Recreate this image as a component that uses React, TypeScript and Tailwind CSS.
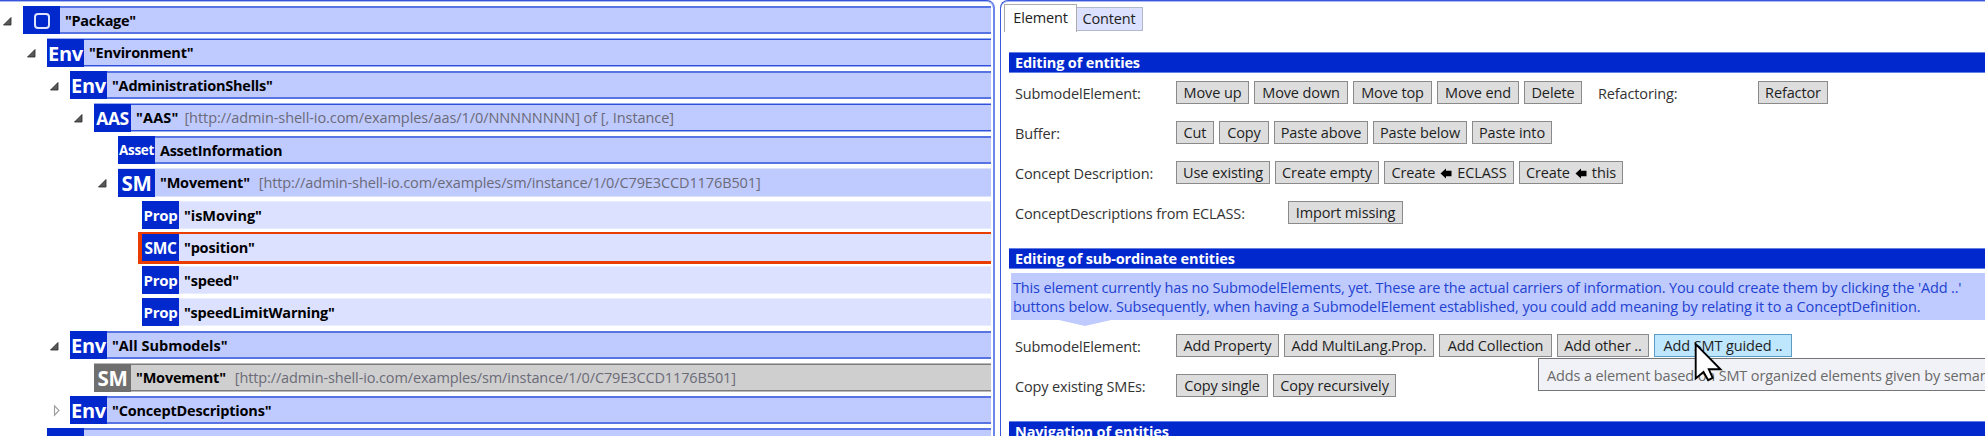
import React from "react";

type Kind = "blue" | "fine" | "plain" | "light" | "selected" | "grey";

interface NodeRow {
  indent: string;
  slot: string;
  kind: Kind;
  tag: string;
  tagSize: string;
  arrow?: "open" | "closed";
  name: string;
  nameTrack: string;
  info?: string;
  infoGap?: string;
  infoTrack?: string;
}

const SM_URL = "[http://admin-shell-io.com/examples/sm/instance/1/0/C79E3CCD1176B501]";
const ENV = "pt-[2px] text-[20px] tracking-[-0.3px]";
const SM = "pt-[2px] text-[20.5px] tracking-[-0.3px]";
const PROP = "text-[15px] tracking-[-0.3px]";

const nodes: NodeRow[] = [
  { indent: "pl-0", slot: "h-[32px]", kind: "blue", tag: "", tagSize: "pt-px", arrow: "open", name: '"Package"', nameTrack: "tracking-[-0.3px]" },
  { indent: "pl-[24px]", slot: "h-[33px]", kind: "fine", tag: "Env", tagSize: ENV, arrow: "open", name: '"Environment"', nameTrack: "tracking-[-0.27px]" },
  { indent: "pl-[47px]", slot: "h-[32px]", kind: "blue", tag: "Env", tagSize: ENV, arrow: "open", name: '"AdministrationShells"', nameTrack: "tracking-[-0.23px]" },
  { indent: "pl-[71px]", slot: "h-[33px]", kind: "fine", tag: "AAS", tagSize: "pt-[2px] text-[17.5px] tracking-[-0.4px]", arrow: "open", name: '"AAS"', nameTrack: "tracking-[0.15px]", info: "[http://admin-shell-io.com/examples/aas/1/0/NNNNNNNN] of [, Instance]", infoGap: "ml-[6px]", infoTrack: "tracking-[-0.07px]" },
  { indent: "pl-[95px]", slot: "h-[32px]", kind: "blue", tag: "Asset", tagSize: "pt-px text-[13.5px] tracking-[-0.3px]", name: "AssetInformation", nameTrack: "tracking-[-0.3px]" },
  { indent: "pl-[95px]", slot: "h-[33px]", kind: "plain", tag: "SM", tagSize: SM, arrow: "open", name: '"Movement"', nameTrack: "tracking-[-0.2px]", info: SM_URL, infoGap: "ml-[9px]", infoTrack: "tracking-[-0.11px]" },
  { indent: "pl-[119px]", slot: "h-[32px]", kind: "light", tag: "Prop", tagSize: PROP, name: '"isMoving"', nameTrack: "tracking-[-0.05px]" },
  { indent: "pl-[115px]", slot: "h-[33px]", kind: "selected", tag: "SMC", tagSize: "pt-[2px] text-[15.5px] tracking-[-0.3px]", name: '"position"', nameTrack: "tracking-[-0.2px]" },
  { indent: "pl-[119px]", slot: "h-[32px]", kind: "light", tag: "Prop", tagSize: PROP, name: '"speed"', nameTrack: "tracking-[-0.2px]" },
  { indent: "pl-[119px]", slot: "h-[33px]", kind: "light", tag: "Prop", tagSize: PROP, name: '"speedLimitWarning"', nameTrack: "tracking-[-0.23px]" },
  { indent: "pl-[47px]", slot: "h-[32px]", kind: "blue", tag: "Env", tagSize: ENV, arrow: "open", name: '"All Submodels"', nameTrack: "tracking-[0px]" },
  { indent: "pl-[71px]", slot: "h-[33px]", kind: "grey", tag: "SM", tagSize: SM, name: '"Movement"', nameTrack: "tracking-[-0.2px]", info: SM_URL, infoGap: "ml-[9px]", infoTrack: "tracking-[-0.12px]" },
  { indent: "pl-[47px]", slot: "h-[32px]", kind: "blue", tag: "Env", tagSize: ENV, arrow: "closed", name: '"ConceptDescriptions"', nameTrack: "tracking-[-0.2px]" },
  { indent: "pl-[24px]", slot: "h-[33px]", kind: "blue", tag: "Env", tagSize: ENV, name: "", nameTrack: "" },
];

const rowStyle: Record<Kind, string> = {
  blue: "h-[28px] bg-[#bfcaff] border-y-2 border-[#5873e2]",
  fine: "h-[29px] bg-[#bfcaff] border-y border-[#9aacf3] shadow-[inset_0_1px_0_#2f50d8,inset_0_-1px_0_#2f50d8]",
  plain: "h-[29px] bg-[#bfcaff] border-y border-[#dde3ff]",
  light: "h-[28px] bg-[#dbe1ff] border-y border-[#e8ecff]",
  selected: "-mt-px h-[32px] bg-[#dbe1ff] border-t-2 border-b-3 border-l-4 border-[#eb3c00]",
  grey: "h-[29px] bg-[#cfcfcf] border-y border-[#b9b9b9] shadow-[inset_0_1px_0_#7c7c7c,inset_0_-1px_0_#7c7c7c]",
};

function Arrow({ state }: { state?: "open" | "closed" }) {
  return (
    <svg className="mt-[9px] h-[12px] w-[23px] shrink-0" viewBox="0 0 23 12">
      {state === "open" && <path d="M11 2.5V10H3.5Z" fill="#595959" stroke="#262626" strokeWidth="0.8" />}
      {state === "closed" && <path d="M7.5 0.8V10.2L12 5.5Z" fill="#fff" stroke="#a0a0a0" strokeWidth="1.2" />}
    </svg>
  );
}

function TreeRow({ node }: { node: NodeRow }) {
  const tagBg = node.kind === "grey" ? "bg-[#6f6f6f]" : "bg-[#0028cd]";
  const tagHeight = node.kind === "selected" ? "h-[27px]" : "h-[28px]";
  return (
    <div className={`flex shrink-0 ${node.slot} ${node.indent}`}>
      <Arrow state={node.arrow} />
      <div className={`flex min-w-0 flex-1 items-center ${rowStyle[node.kind]}`}>
        <div className={`flex w-[37px] shrink-0 items-center justify-center font-bold text-white ${tagHeight} ${tagBg} ${node.tagSize}`}>
          {node.tag || <span className="size-[16px] rounded-[4px] border-2 border-[#dfe5ff]" />}
        </div>
        <span className={`ml-[5px] text-[14.5px] leading-[19px] font-bold text-black ${node.nameTrack}`}>{node.name}</span>
        {node.info && <span className={`text-[14.5px] leading-[19px] text-[#6b6b78] ${node.infoGap} ${node.infoTrack}`}>{node.info}</span>}
      </div>
    </div>
  );
}

function Btn({ w, hot, children }: { w: string; hot?: boolean; children: React.ReactNode }) {
  return (
    <button
      className={`flex h-[23px] shrink-0 items-center justify-center border pt-[2px] text-[14.5px] leading-none tracking-[-0.12px] text-[#1e1e1e] ${w} ${
        hot ? "border-[#5b9bc8] bg-[#bee6fd]" : "border-[#8a8a8a] bg-[#dddddd]"
      }`}
    >
      {children}
    </button>
  );
}

function LeftArrow() {
  return (
    <svg className="mx-[5px] h-[12px] w-[12px]" viewBox="0 0 12 12">
      <path d="M0.5 5.5L6 0.5V2.7H11.5V8.3H6V10.5Z" fill="#000" />
    </svg>
  );
}

function Header({ children }: { children: React.ReactNode }) {
  return (
    <div className="flex h-[21px] shrink-0 items-center border-y border-[#6480e4] bg-[#0028cd] pt-[2px] pl-[6px] text-[14.5px] leading-none font-bold tracking-[-0.14px] text-white">
      {children}
    </div>
  );
}

function Row({ label, labelW = "w-[161px]", children }: { label: string; labelW?: string; children: React.ReactNode }) {
  return (
    <div className="flex h-[40px] shrink-0 items-start pl-[6px]">
      <div className={`flex h-[25px] shrink-0 items-center text-[14.5px] tracking-[-0.14px] text-[#333] ${labelW}`}>{label}</div>
      <div className="flex gap-[5px]">{children}</div>
    </div>
  );
}

export default function App() {
  return (
    <div className="relative flex h-[436px] w-[1985px] overflow-hidden bg-white font-['Open_Sans','Noto_Sans',sans-serif] whitespace-nowrap">
      <div className="h-[450px] w-[995px] shrink-0 rounded-tr-[8px] border-t border-r-2 border-t-[#3453d9] border-r-[#6c86ea] pt-[5px] pr-[2px] shadow-[inset_0_1px_0_#a9b7f4]">
        {nodes.map((n, i) => (
          <TreeRow key={i} node={n} />
        ))}
      </div>
      <div className="ml-[5px] flex h-[450px] flex-1 flex-col rounded-tl-[8px] border-t border-l border-[#3a58db] shadow-[inset_0_1px_0_#a9b7f4]">
        <div className="ml-[3px] flex h-[51px] items-start pt-[3px] text-[14.5px] tracking-[-0.16px] text-[#222]">
          <div className="flex h-[28px] w-[73px] items-center justify-center border border-b-0 border-[#acacac] bg-white pb-[2px]">Element</div>
          <div className="mt-[3px] flex h-[24px] w-[66px] items-center justify-center border border-l-0 border-[#b4b8cc] bg-[#dbe1ff] pr-px">Content</div>
        </div>
        <div className="ml-[8px] flex flex-col">
          <Header>Editing of entities</Header>
          <div className="mt-[8px]">
            <Row label="SubmodelElement:">
              <Btn w="w-[73px]">Move up</Btn>
              <Btn w="w-[94px]">Move down</Btn>
              <Btn w="w-[79px]">Move top</Btn>
              <Btn w="w-[82px]">Move end</Btn>
              <Btn w="w-[58px]">Delete</Btn>
              <div className="ml-[11px] flex h-[25px] w-[155px] items-center text-[14.5px] tracking-[-0.14px] text-[#333]">Refactoring:</div>
              <Btn w="w-[70px]">Refactor</Btn>
            </Row>
            <Row label="Buffer:">
              <Btn w="w-[38px]">Cut</Btn>
              <Btn w="w-[50px]">Copy</Btn>
              <Btn w="w-[94px]">Paste above</Btn>
              <Btn w="w-[94px]">Paste below</Btn>
              <Btn w="w-[80px]">Paste into</Btn>
            </Row>
            <Row label="Concept Description:">
              <Btn w="w-[94px]">Use existing</Btn>
              <Btn w="w-[104px]">Create empty</Btn>
              <Btn w="w-[130px]">Create<LeftArrow />ECLASS</Btn>
              <Btn w="w-[104px]">Create<LeftArrow />this</Btn>
            </Row>
            <Row label="ConceptDescriptions from ECLASS:" labelW="w-[273px]">
              <Btn w="w-[115px]">Import missing</Btn>
            </Row>
          </div>
          <div className="mt-[7px]">
            <Header>Editing of sub-ordinate entities</Header>
          </div>
          <div className="mt-[4px] ml-[2px] h-[47px] bg-[#bfcaff] pt-[5px] pl-[2px] text-[14.5px] leading-[19px] text-[#2242d0]">
            <div className="tracking-[-0.154px]">
              This element currently has no SubmodelElements, yet. These are the actual carriers of information. You could create them by clicking the 'Add ..'
            </div>
            <div className="tracking-[-0.113px]">
              buttons below. Subsequently, when having a SubmodelElement established, you could add meaning by relating it to a ConceptDefinition.
            </div>
          </div>
          <svg className="ml-[50px] h-[6px] w-[52px]" viewBox="0 0 52 6">
            <path d="M0 0H52L26 6Z" fill="#bfcaff" />
          </svg>
          <div className="mt-[8px]">
            <Row label="SubmodelElement:">
              <Btn w="w-[103px]">Add Property</Btn>
              <Btn w="w-[150px]">Add MultiLang.Prop.</Btn>
              <Btn w="w-[113px]">Add Collection</Btn>
              <Btn w="w-[92px]">Add other ..</Btn>
              <Btn w="w-[138px]" hot>Add SMT guided ..</Btn>
            </Row>
            <Row label="Copy existing SMEs:">
              <Btn w="w-[92px]">Copy single</Btn>
              <Btn w="w-[123px]">Copy recursively</Btn>
            </Row>
          </div>
          <div className="mt-[7px]">
            <Header>Navigation of entities</Header>
          </div>
        </div>
      </div>
      <div className="absolute top-[358px] left-[1538px] flex h-[33px] w-[460px] items-center border border-[#767676] bg-[#f1f2f7] pt-[2px] pl-[8px] text-[14.5px] tracking-[-0.13px] text-[#6a6a6a]">
        Adds a element based on SMT organized elements given by semantic ids
      </div>
      <svg className="absolute top-[341px] left-[1694px] h-[42px] w-[30px]" viewBox="0 0 30 42">
        <path d="M1.7 3V37.5L9.5 31L14.2 39.2L18.7 36.8L14.8 28.3H26.5Z" fill="#fff" stroke="#000" strokeWidth="1.9" />
      </svg>
    </div>
  );
}
